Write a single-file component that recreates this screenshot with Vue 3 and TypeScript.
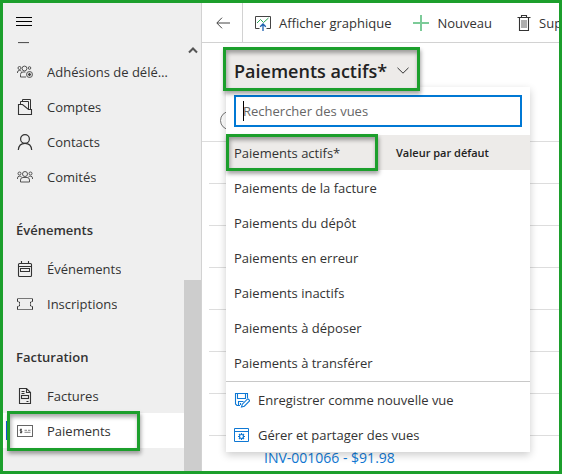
<script setup lang="ts">
import { ref } from 'vue'

interface NavItem {
  label: string
  icon: string
  selected?: boolean
}
interface NavGroup {
  title?: string
  items: NavItem[]
}

const groups: NavGroup[] = [
  {
    items: [
      { label: 'Adhésions de délégués', icon: 'members' },
      { label: 'Comptes', icon: 'accounts' },
      { label: 'Contacts', icon: 'contact' },
      { label: 'Comités', icon: 'committee' },
    ],
  },
  {
    title: 'Événements',
    items: [
      { label: 'Événements', icon: 'calendar' },
      { label: 'Inscriptions', icon: 'ticket' },
    ],
  },
  {
    title: 'Facturation',
    items: [
      { label: 'Factures', icon: 'invoice' },
      { label: 'Paiements', icon: 'payment', selected: true },
    ],
  },
]

const views: string[] = [
  'Paiements actifs*',
  'Paiements de la facture',
  'Paiements du dépôt',
  'Paiements en erreur',
  'Paiements inactifs',
  'Paiements à déposer',
  'Paiements à transférer',
]
const current = ref(views[0])
const search = ref('')
const emptyRows = 7
</script>

<template>
  <div class="app">
    <aside class="sidebar">
      <button class="burger" type="button" aria-label="Menu">
        <svg width="16" height="11" viewBox="0 0 16 11"><path d="M0 1.500h16M0 5.500h16M0 9.500h16" stroke="#000" fill="none" /></svg>
      </button>
      <div class="nav-area">
        <nav class="nav">
          <div class="clipped">
            <svg width="16" height="3" viewBox="0 0 16 3"><path d="M1 .500h11" stroke="#555" stroke-width="1.200" /></svg>
          </div>
          <section v-for="(group, g) in groups" :key="g">
            <h2 v-if="group.title" class="group-title">{{ group.title }}</h2>
            <a
              v-for="item in group.items"
              :key="item.label"
              href="#"
              class="nav-item"
              :class="{ selected: item.selected }"
            >
              <svg class="nav-icon" width="16" height="16" viewBox="0 0 16 16" fill="none" stroke="#333">
                <g v-if="item.icon === 'members'" stroke="#444" stroke-width=".9">
                  <circle cx="7.500" cy="4.500" r="2.400" />
                  <circle cx="2.500" cy="4" r="1.500" />
                  <circle cx="12.500" cy="4" r="1.300" />
                  <path d="M.5 9V8q0-1.500 2-1.500 1.500 0 2 .8M3.500 13v-2.500q0-2.500 2.500-2.500h2.500M3.500 13h5.500" />
                  <circle cx="12.500" cy="10.500" r="3" />
                  <path d="M12.500 8.800v3.400M10.800 10.500h3.400" stroke-width="1.300" />
                </g>
                <g v-else-if="item.icon === 'accounts'">
                  <path d="M1.500 5.500v10h13v-5h-3L5.500 5.500z" stroke-width="1.100" />
                  <path d="M3.500 5.500v-3h8v8M5.500 2.500v-2h8v10" />
                </g>
                <g v-else-if="item.icon === 'contact'" stroke-width="1.200">
                  <circle cx="8" cy="5" r="4.400" />
                  <path d="M1.300 16q.5-6.600 6.700-6.600T14.700 16" />
                </g>
                <g v-else-if="item.icon === 'committee'" stroke="#444" stroke-width=".9">
                  <circle cx="8" cy="5" r="2.500" />
                  <circle cx="2.500" cy="4.500" r="1.500" />
                  <circle cx="13.500" cy="4.500" r="1.500" />
                  <path d="M.5 10V9q0-1.800 2-1.800 1.500 0 2 .6M15.500 10V9q0-1.800-2-1.800-1.500 0-2 .6" />
                  <path d="M3.500 13v-2q0-2.500 2.500-2.500h4q2.500 0 2.500 2.500v2z" />
                </g>
                <g v-else-if="item.icon === 'calendar'">
                  <rect x="1.500" y="2.500" width="13" height="13" rx="1" stroke-width="1.100" />
                  <path d="M4.500 0v2.500M11.500 0v2.500M1.500 5.500h13" stroke-width="1.100" />
                  <rect x="3.500" y="7.500" width="9" height="3" />
                </g>
                <g v-else-if="item.icon === 'ticket'">
                  <path d="M.5 2.500h15v3l-2 .5v4l2 .5v3H.5v-3l2-.5V6l-2-.5z" stroke="#777" />
                  <path d="M.5 5.500V3M15.500 5.500V3M.5 13.500v-3M15.500 13.500v-3M2.500 6v1M2.500 9v1M13.500 6v1M13.500 9v1" />
                </g>
                <g v-else-if="item.icon === 'invoice'" stroke-width="1.100">
                  <path d="M2.500.500h7l4 4v11h-11zM9.500.500v4h4" />
                  <path d="M4.500 3.500h3M4.500 5.500h3M9.500 13.500h2" />
                  <rect x="4.500" y="7.500" width="7" height="3" />
                </g>
                <g v-else>
                  <rect x=".5" y="2.500" width="15" height="11" stroke="#666" />
                  <path d="M4.800 6.500H3.200v1.500h1.600v1.500H3M4 5.500v5" stroke-width=".8" />
                  <path d="M7.500 7.300h2.500M11 7.300h2.500M7.500 9.300h6" stroke="#777" stroke-width=".9" />
                </g>
              </svg>
              <span class="nav-label">{{ item.label }}</span>
              <span v-if="item.selected" class="mark mark-nav"></span>
            </a>
          </section>
        </nav>
        <div class="scrollbar">
          <svg width="10" height="7" viewBox="0 0 10 7"><path d="M1 5.500 5 1.500l4 4" fill="none" stroke="#555" stroke-width="2" /></svg>
          <div class="thumb"></div>
        </div>
      </div>
    </aside>

    <main class="main">
      <header class="toolbar">
        <button class="back" type="button" aria-label="Retour">
          <svg width="14" height="12" viewBox="0 0 14 12"><path d="M14 6H1M6 .7.800 6 6 11.300" fill="none" stroke="#444" /></svg>
        </button>
        <button class="command chart" type="button">
          <svg width="16" height="16" viewBox="0 0 16 16" fill="none">
            <path d="M4.500 13.500h-4V1.500h15v12h-4" stroke="#444" />
            <path d="M2 8l3.500-3.500 3 3L13.500 3" stroke="#2aa65a" />
            <path d="M8 16V9M5.200 11.700 8 9l2.800 2.700" stroke="#1b5fae" stroke-width="1.300" />
          </svg>
          Afficher graphique
        </button>
        <button class="command new" type="button">
          <svg width="16" height="16" viewBox="0 0 16 16"><path d="M8 0v16M0 8h16" stroke="#7ccb98" stroke-width="2" /></svg>
          Nouveau
        </button>
        <button class="command delete" type="button">
          <svg width="14" height="16" viewBox="0 0 14 16" fill="none" stroke="#333">
            <path d="M.5 2.500h13M4.500 2.500v-2h5v2M2.500 2.500v13h9v-13" stroke-width="1.100" />
            <path d="M5 5v8M7 5v8M9 5v8" stroke-width=".8" />
          </svg>
          Supprimer
        </button>
      </header>

      <div class="content">
        <div class="view-head">
          <button class="view-button" type="button" aria-haspopup="listbox">
            <span>{{ current }}</span>
            <svg width="12" height="7" viewBox="0 0 12 7"><path d="M.5.800 6 6.200 11.500.800" fill="none" stroke="#333" /></svg>
            <span class="mark mark-title"></span>
          </button>

          <div class="menu">
            <div class="search">
              <input v-model="search" type="text" placeholder="Rechercher des vues" aria-label="Rechercher des vues" />
              <span class="caret"></span>
            </div>
            <div class="views">
              <button
                v-for="view in views"
                :key="view"
                type="button"
                class="view"
                :class="{ active: view === current }"
                @click="current = view"
              >
                <span>{{ view }}</span>
                <template v-if="view === current">
                  <span class="default">Valeur par défaut</span>
                  <span class="mark mark-view"></span>
                </template>
              </button>
            </div>
            <div class="actions">
              <button type="button" class="action">
                <svg width="16" height="16" viewBox="0 0 16 16" fill="none" stroke="#0f78d4" stroke-width="1.100">
                  <path d="M6 13.500H3L1.500 12V1.500h12V6M3.500 1.500v5h8v-5M4.500 13.500V9.500h5M6.500 11v2" />
                  <path d="M7.500 15l.8-2.800 5.500-5.500 2 2-5.500 5.500z" />
                </svg>
                Enregistrer comme nouvelle vue
              </button>
              <button type="button" class="action">
                <svg width="16" height="16" viewBox="0 0 16 16" fill="none" stroke="#0f78d4">
                  <path d="M.5 1.500h14v13H.5zM.5 4.500h14" />
                  <circle cx="7.500" cy="9.500" r="2" stroke-width="1.200" />
                  <path d="M7.500 6v1.500M7.500 11.500V13M4 9.500h1.500M9.500 9.500H11M5 7l1 1M9 11l1 1M10 7 9 8M6 11l-1 1" stroke-width="1.200" />
                </svg>
                Gérer et partager des vues
              </button>
            </div>
          </div>
        </div>

        <div class="grid-head"><span class="round"></span></div>
        <div class="rows">
          <div v-for="n in emptyRows" :key="n" class="row"></div>
          <div class="row"><a href="#">INV-001066 - $91.98</a></div>
        </div>
      </div>
    </main>
  </div>
</template>

<style>
body {
  margin: 0;
}
</style>

<style scoped>
.app {
  box-sizing: border-box;
  display: flex;
  height: 100vh;
  overflow: hidden;
  border: 3px solid #1c9f2c;
  background: #fff;
  color: #333;
  font: 13px/20px "Open Sans", "Noto Sans", sans-serif;
}
button {
  margin: 0;
  padding: 0;
  border: 0;
  background: none;
  color: inherit;
  font: inherit;
  text-align: left;
}
a {
  text-decoration: none;
}
svg {
  flex: none;
  display: block;
}
.sidebar {
  flex: none;
  display: flex;
  flex-direction: column;
  width: 198px;
  border-right: 1px solid #d2d2d2;
  background: #efefef;
}
.burger {
  flex: none;
  display: flex;
  align-items: center;
  height: 37px;
  padding-left: 13px;
}
.nav-area {
  flex: 1;
  display: flex;
  min-height: 0;
}
.nav {
  flex: 1;
  min-width: 0;
}
.clipped {
  box-sizing: border-box;
  height: 14px;
  padding: 2px 14px 0;
}
.group-title {
  margin: 0;
  padding: 26px 0 11px 13px;
  font-size: 13px;
  font-weight: 600;
  line-height: 20px;
}
.nav-item {
  position: relative;
  display: flex;
  align-items: center;
  gap: 14px;
  height: 35px;
  padding: 0 16px 0 14px;
  color: #333;
}
.nav-label {
  overflow: hidden;
  white-space: nowrap;
  text-overflow: ellipsis;
}
.selected {
  background: #fff;
}
.selected::before {
  content: "";
  position: absolute;
  left: 3px;
  top: 8px;
  bottom: 8px;
  width: 3px;
  background: #0b5be0;
}
.scrollbar {
  display: flex;
  flex-direction: column;
  align-items: center;
  justify-content: space-between;
  width: 17px;
  padding-top: 7px;
}
.thumb {
  width: 100%;
  height: 45%;
  background: #cdcdcd;
}
.mark {
  position: absolute;
  z-index: 5;
  border: 3px solid #1c9f2c;
  box-shadow: 1px 3px 4px rgba(0, 0, 0, 0.35), inset 1px 3px 4px rgba(0, 0, 0, 0.35);
  pointer-events: none;
}
.mark-nav {
  top: -2px;
  bottom: -3px;
  left: 4px;
  right: 44px;
}
.mark-title {
  inset: -3px;
}
.mark-view {
  top: -1px;
  bottom: -1px;
  left: 0;
  width: 149px;
  box-sizing: content-box;
  width: 146px;
}
.main {
  flex: 1;
  min-width: 0;
}
.toolbar {
  display: flex;
  height: 39px;
  overflow: hidden;
  border-bottom: 1px solid #d2d2d2;
}
.back {
  flex: none;
  width: 41px;
  padding-left: 14px;
  border-right: 1px solid #d2d2d2;
}
.command {
  flex: none;
  display: flex;
  align-items: center;
  gap: 8px;
  padding-left: 12px;
  white-space: nowrap;
}
.new {
  padding-left: 22px;
}
.delete {
  padding-left: 25px;
}
.view-head {
  position: relative;
  padding: 7px 24px 0;
}
.view-button {
  position: relative;
  z-index: 4;
  box-sizing: border-box;
  display: flex;
  align-items: center;
  gap: 10px;
  height: 38px;
  padding: 3px 8px 0;
  background: #edebe9;
  color: #222;
  font-size: 18px;
  font-weight: 600;
  white-space: nowrap;
}
.menu {
  position: absolute;
  z-index: 3;
  top: 44px;
  left: 24px;
  right: 29px;
  background: #fff;
  box-shadow: 0 3px 8px rgba(0, 0, 0, 0.2);
}
.search {
  position: relative;
  padding: 8px;
}
.search input {
  display: block;
  box-sizing: border-box;
  width: 100%;
  height: 32px;
  padding: 0 7px;
  border: 2px solid #0078d4;
  outline: 0;
  color: #333;
  font: inherit;
}
.search input::placeholder {
  color: #666;
  opacity: 1;
}
.caret {
  position: absolute;
  top: 14px;
  left: 17px;
  width: 1px;
  height: 20px;
  background: #000;
}
.view {
  position: relative;
  display: flex;
  align-items: center;
  width: 100%;
  height: 35px;
  padding-left: 8px;
}
.active {
  background: #edebe9;
}
.default {
  position: absolute;
  left: 170px;
  font-size: 11px;
  font-weight: 600;
  color: #222;
}
.actions {
  margin-top: 1px;
  border-top: 1px solid #c8c8c8;
}
.action {
  display: flex;
  align-items: center;
  gap: 8px;
  width: 100%;
  height: 35px;
  padding-left: 8px;
}
.grid-head {
  display: flex;
  align-items: flex-end;
  height: 54px;
  box-sizing: border-box;
  padding: 0 0 11px 18px;
  border-bottom: 1px solid #ddd;
}
.round {
  box-sizing: border-box;
  width: 19px;
  height: 19px;
  border: 1px solid #777;
  border-radius: 50%;
}
.rows {
  padding-left: 7px;
}
.row {
  display: flex;
  align-items: center;
  box-sizing: border-box;
  height: 42px;
  padding: 2px 0 0 55px;
  border-bottom: 1px solid #ddd;
}
.row a {
  color: #0f78d4;
  font-size: 14px;
}
</style>
